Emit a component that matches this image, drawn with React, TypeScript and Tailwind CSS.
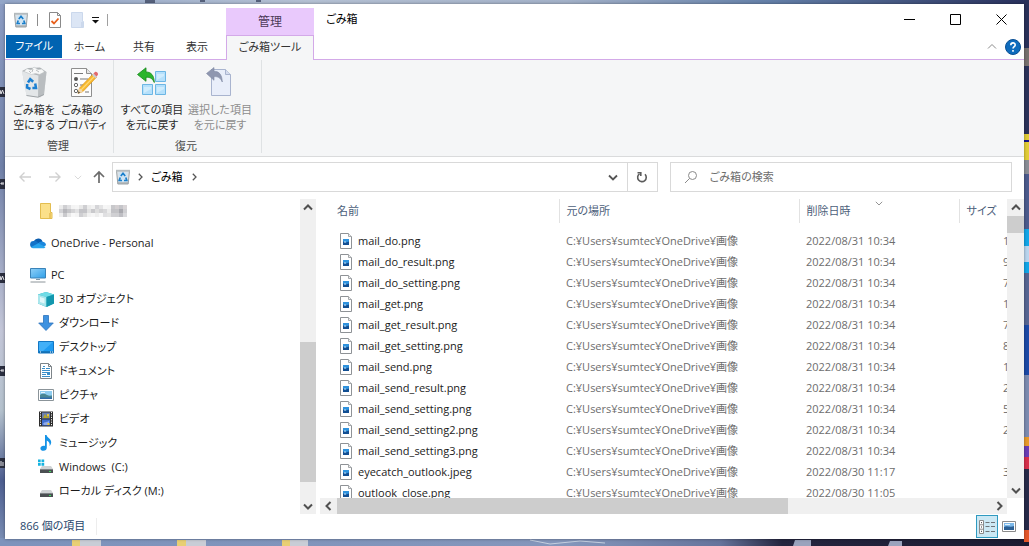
import { useState } from "react";
import type { ReactNode } from "react";

type FileRow = {
  name: string;
  date: string;
  size: string;
};

type TreeItem = {
  label: string;
  icon: ReactNode;
};

const LOCATION = "C:¥Users¥sumtec¥OneDrive¥画像";

const files: FileRow[] = [
  { name: "mail_do.png", date: "2022/08/31 10:34", size: "1" },
  { name: "mail_do_result.png", date: "2022/08/31 10:34", size: "9" },
  { name: "mail_do_setting.png", date: "2022/08/31 10:34", size: "7" },
  { name: "mail_get.png", date: "2022/08/31 10:34", size: "1" },
  { name: "mail_get_result.png", date: "2022/08/31 10:34", size: "7" },
  { name: "mail_get_setting.png", date: "2022/08/31 10:34", size: "8" },
  { name: "mail_send.png", date: "2022/08/31 10:34", size: "1" },
  { name: "mail_send_result.png", date: "2022/08/31 10:34", size: "2" },
  { name: "mail_send_setting.png", date: "2022/08/31 10:34", size: "5" },
  { name: "mail_send_setting2.png", date: "2022/08/31 10:34", size: "2" },
  { name: "mail_send_setting3.png", date: "2022/08/31 10:34", size: "" },
  { name: "eyecatch_outlook.jpeg", date: "2022/08/30 11:17", size: "3" },
  { name: "outlook_close.png", date: "2022/08/30 11:05", size: "" },
];

/* ---------- icons ---------- */

function Chevron({ dir, className }: { dir: "up" | "down" | "left" | "right"; className: string }) {
  const d = {
    up: "M1 6.5 5 2.5l4 4",
    down: "M1 3.5l4 4 4-4",
    left: "M6.5 1 2.5 5l4 4",
    right: "M3.5 1l4 4-4 4",
  }[dir];
  return (
    <svg viewBox="0 0 10 10" className={className} fill="none" stroke="currentColor" aria-hidden="true">
      <path d={d} />
    </svg>
  );
}

function SmallBinIcon() {
  return (
    <svg viewBox="0 0 16 16" className="size-4 shrink-0" aria-hidden="true">
      <path d="M1.500 1.500h13l-1.300 13.500H2.800z" fill="#dfe3e6" stroke="#9aa1a5" />
      <path d="M1 .8h14v1.900H1z" fill="#b4babe" />
      <path d="M3.500 3.500h9l-.8 9.500H4.300z" fill="#cfe4f3" />
      <path d="M5.800 7 8 4.300 10.200 7M10.800 8.500l1 3H9M7 11.500H4.200l1-3" fill="none" stroke="#1a7fcb" strokeWidth="1.700" />
      <path d="M3 14h10" stroke="#8f979c" />
    </svg>
  );
}

function LargeBinIcon() {
  return (
    <svg viewBox="0 0 32 32" className="size-8" aria-hidden="true">
      <path d="M4 5 8.500 29.500 22 31.500 26 28.500 28.500 6z" fill="#d4d7d9" />
      <path d="M4 5 8.500 29.500 20 31.200 20.500 9.500z" fill="#e3e6e8" />
      <path d="M20.500 9.500 20 31.200 26 28.500 28.500 6z" fill="#b9bdc0" />
      <path d="M4 5 10 2l12-.5L28.500 6l-8 3.500z" fill="#aeb2b5" />
      <path d="M6 5.500 9 2.500l4 1.500 3-3 4 2.500 4-.5 2.500 3-5 2.500-4-1-4 1z" fill="#f7f8f8" stroke="#c0c4c6" strokeWidth=".6" />
      <path d="m11 5 2 2M18 4l3 2M15 3l-1 3" stroke="#9da2a5" strokeWidth=".7" />
      <path d="M8.500 29.500 20 31.200 26 28.500" fill="none" stroke="#9ea3a6" />
      <g fill="none" stroke="#1c80d2" strokeWidth="2.500">
        <path d="m10 16.500 2.200-3.300 3 2.600" />
        <path d="M17.200 17.500 18 22h-3.600" />
        <path d="M12.500 23 9 21.500l.2-3.500" />
      </g>
    </svg>
  );
}

function PropertiesIcon() {
  return (
    <svg viewBox="0 0 32 32" className="size-8" aria-hidden="true">
      <path d="M5.500 2.500h15l5 5v23h-20z" fill="#fcfcfc" stroke="#8e8e8e" />
      <path d="M20.500 2.500v5h5" fill="#e6e6e6" stroke="#8e8e8e" />
      <circle cx="10" cy="13" r="2" fill="#555" />
      <circle cx="10" cy="19" r="1.700" fill="none" stroke="#666" />
      <circle cx="10" cy="25" r="1.700" fill="none" stroke="#666" />
      <path d="M8 7.500h9M14 13h8M14 19h5M19 26h4" stroke="#777" strokeWidth="1.200" />
      <path d="m12 27.500 1.500-5.500L27 8l3.500 3.200L17 25.500z" fill="#f7b92f" stroke="#d58c17" strokeWidth=".6" />
      <path d="M15 24 29 9.700" stroke="#ffd978" strokeWidth="1.200" />
      <path d="m12 27.500 1.500-5.500 3.500 3.500z" fill="#f2d8b0" />
      <path d="m12 27.500.6-2.200 1.400 1.400z" fill="#333" />
      <path d="m26 9 1.500-1.500 3.500 3.200-1.500 1.500z" fill="#c9cdd1" />
      <path d="M27.500 7.500 29 6c1.500-.8 3.600 1 2.800 3l-1.300 1.500z" fill="#e2696b" />
    </svg>
  );
}

function RestoreAllIcon() {
  return (
    <svg viewBox="0 0 32 32" className="size-8" aria-hidden="true">
      <g fill="#b5e0fb" stroke="#6cb6e4">
        <path d="M19.500 5.500h10v10h-10zM6.500 18.500h10v10h-10zM19.500 18.500h10v10h-10z" />
      </g>
      <path d="M21 21h7v2l-7 4zM8 21h7v2l-7 4zM21 8h7v2l-7 4z" fill="#cfecfd" />
      <path
        d="M1.500 8.500 10 1.800v4.200c5 0 8 3 8.300 10.500-2-4.500-4.500-5.300-8.300-5.200v4z"
        fill="#2bb52d"
        stroke="#14861b"
        strokeWidth=".8"
      />
    </svg>
  );
}

function RestoreSelectedIcon() {
  return (
    <svg viewBox="0 0 32 32" className="size-8" aria-hidden="true">
      <path d="M7.500 3.500h14l5 5v21h-19z" fill="#e9eefa" stroke="#a9b4cf" />
      <path d="M21.500 3.500v5h5" fill="#d5dcee" stroke="#a9b4cf" />
      <path
        d="M2.500 7.500 10 1.500v3.800c5 0 8 3 8.300 10.700-2-4.500-4.500-5.500-8.300-5.400v3.700z"
        fill="#8f97b0"
        stroke="#7d86a1"
        strokeWidth=".6"
      />
    </svg>
  );
}

function FolderIcon() {
  return (
    <svg viewBox="0 0 16 16" className="size-4 shrink-0" aria-hidden="true">
      <path d="M2 .5h11v9h1V15.500H2z" fill="#fbe08a" />
      <path d="M2.500.5h10v9h1.500v6H2.500z" fill="none" stroke="#e3bd50" />
      <path d="M12 10v5" stroke="#d9ab36" />
    </svg>
  );
}

function OneDriveIcon() {
  return (
    <svg viewBox="0 0 16 16" className="size-4 shrink-0" aria-hidden="true">
      <path d="M4 6A4.600 4.600 0 0 1 12.500 6.500l-3.500 4-5-1z" fill="#0b5cad" />
      <path d="M3.500 13A3.500 3.500 0 0 1 3.800 5.900c1.500-.2 2.500.4 3.500 1L12 12z" fill="#1272c8" />
      <path d="M7 9.500C9 6.500 11.500 5.900 12.800 6.800 15 7 16 8.600 16 10.200L13 12z" fill="#1b87dd" />
      <path d="M1.200 12 8.300 8.300 15.500 12c-.5.900-1.200 1.300-2.200 1.300H3.500c-1 0-1.800-.5-2.300-1.300z" fill="#28a3ec" />
    </svg>
  );
}

function PcIcon() {
  return (
    <svg viewBox="0 0 16 16" className="size-4 shrink-0" aria-hidden="true">
      <defs>
        <linearGradient id="pcScreen" x1="0" y1="0" x2="1" y2="1">
          <stop offset="0" stopColor="#8fd0f8" />
          <stop offset="1" stopColor="#2f9fe8" />
        </linearGradient>
      </defs>
      <path d="M.5 1.500h15v9.500H.5z" fill="url(#pcScreen)" stroke="#3a83b8" />
      <path d="M6 12.500h4" stroke="#7d98ab" />
      <path d="M.5 15h15" stroke="#8c9499" />
    </svg>
  );
}

function CubeIcon() {
  return (
    <svg viewBox="0 0 16 16" className="size-4 shrink-0" aria-hidden="true">
      <path d="M0 3.500 8 1l8 2.500v9L8.500 16 0 12.500z" fill="#20aebf" />
      <path d="M0 3.500 8 1l8 2.500L8.500 6z" fill="#6fdce6" />
      <path d="M0 3.500 8.500 6v10L0 12.500z" fill="#a9e6ec" />
      <path d="M2 6l4.500 1.500v5L2 11z" fill="#e1f8fa" />
      <path d="M8.500 6 16 3.500v9L8.500 16z" fill="#1397ae" />
    </svg>
  );
}

function DownloadIcon() {
  return (
    <svg viewBox="0 0 16 16" className="size-4 shrink-0" aria-hidden="true">
      <path d="M5.500.5h5V8h4.800L8 15.500.7 8h4.800z" fill="#3e92e0" stroke="#2b72bd" strokeWidth=".8" />
    </svg>
  );
}

function DesktopIcon() {
  return (
    <svg viewBox="0 0 16 16" className="size-4 shrink-0" aria-hidden="true">
      <path d="M.5 2.500h15v11.500H.5z" fill="#1e9bf2" stroke="#1377c4" />
      <path d="M1 3h14L5 12H1z" fill="#42b0f8" />
      <path d="M1 13h14" stroke="#0c568f" />
      <path d="M2 13h1M12 13h1M14 13h1" stroke="#fff" />
    </svg>
  );
}

function DocumentIcon() {
  return (
    <svg viewBox="0 0 16 16" className="size-4 shrink-0" aria-hidden="true">
      <path d="M2.500.5h8l3 3v12h-11z" fill="#fff" stroke="#7d8489" />
      <path d="M10.500.5v3h3" fill="none" stroke="#7d8489" />
      <path d="M5 3.500h2M4 5.500h3M8 5.500h4M4 7.500h8M4 9.500h8M4 11.500h4M4 13.500h8" stroke="#3a8fca" />
      <path d="M9 10h3v2H9z" fill="#3a8fca" />
    </svg>
  );
}

function PictureIcon() {
  return (
    <svg viewBox="0 0 16 16" className="size-4 shrink-0" aria-hidden="true">
      <path d="M.5 2.500h15v11H.5z" fill="#fff" stroke="#8b9499" />
      <path d="M2 4h12v8H2z" fill="#8fcdf0" />
      <path d="M2 8c3-2 5-1 7 0s4 .5 5 .5V12H2z" fill="#4a8794" />
      <path d="M2 10.500h12V12H2z" fill="#2f6aa8" />
      <path d="M3 5.500h4" stroke="#e5f5fd" />
    </svg>
  );
}

function VideoIcon() {
  return (
    <svg viewBox="0 0 16 16" className="size-4 shrink-0" aria-hidden="true">
      <path d="M1 .5h14v15H1z" fill="#2c2c2c" />
      <path d="M2.500 1v14M13.500 1v14" stroke="#f2f2f2" strokeDasharray="1.200 1.200" />
      <path d="M4 1.500h8v6H4z" fill="#6b7fb0" />
      <path d="M4 8.500h8v6H4z" fill="#3f6fd1" />
      <path d="m5 7 2-4 2 3 2-3v4z" fill="#b5a52a" />
      <path d="M5 13c2-3 3-1 6-3v4H6z" fill="#8fa9ea" />
      <path d="M9 3h2v2H9zM9.500 12h2v2h-2z" fill="#e6c53a" />
    </svg>
  );
}

function MusicIcon() {
  return (
    <svg viewBox="0 0 16 16" className="size-4 shrink-0" aria-hidden="true">
      <path
        d="M7 0h1.600c.2 2.600 4.600 3.600 4.600 7.200 0 1.500-.7 2.800-1.700 3.800.6-2.600-.4-4.600-2.700-5.600v7.400c0 1.800-1.400 3-3.300 3-1.700 0-3.100-.9-3.100-2.400 0-1.600 1.500-2.700 3.300-2.700.5 0 .9.100 1.300.2z"
        fill="#1593e6"
      />
    </svg>
  );
}

function DriveIcon({ system = false }: { system?: boolean }) {
  return (
    <svg viewBox="0 0 16 16" className="size-4 shrink-0" aria-hidden="true">
      <path d="M4 7h9l2 3H2z" fill="#cfd2d4" />
      <path d="M2 10h13v4H2z" fill="#4b4f52" />
      <path d="M2 10.500h13" stroke="#7e8386" />
      <path d="M11 12.500h2" stroke="#38e05a" />
      {system && (
        <>
          <path d="M0 0h7v7H0z" fill="#fff" />
          <path d="M0 .5h2.700v2.700H0zM3.500.5h2.700v2.700H3.500zM0 4h2.700v2.700H0zM3.500 4h2.700v2.700H3.500z" fill="#15b3e0" />
        </>
      )}
    </svg>
  );
}

function ImageFileIcon() {
  return (
    <svg viewBox="0 0 16 16" className="size-4 shrink-0" aria-hidden="true">
      <path d="M2.500.5h8l3 3v12h-11z" fill="#fff" stroke="#8e9296" />
      <path d="M10.500.5v3h3" fill="#eee" stroke="#a5a8ab" />
      <path d="M5 6h6v6H5z" fill="#124f93" />
      <path d="M5 6h6v2.500l-3 1-3-1z" fill="#2f92dd" />
      <path d="M6 8.500h2v1H6z" fill="#c7e6fa" />
    </svg>
  );
}

// pixelated folder name
function MosaicLabel() {
  const cells = [
    "#ececec", "#cfcfd2", "#e0e0e2", "#f4f4f4", "#f6f6f6", "#e8e8e8", "#cfcfd2", "#ececec", "#f2f2f2",
    "#d5d5d8", "#e4e4e5", "#f6f6f6", "#f4f4f4", "#c8c8cb", "#d3cfd1", "#c5c5c9", "#d9d5d7",
    "#d3d3d6", "#b7b7bb", "#c6c6c9", "#d4d4d6", "#e2e2e3", "#c4c4c8", "#c4c4c8", "#e2e2e2", "#c9c9cc",
    "#dedede", "#d1d1d3", "#d8d8da", "#ececec", "#c2c2c6", "#c3c3c6", "#a9a9af", "#cfcfd2",
    "#eeeeee", "#cacacd", "#e8e8e8", "#f8f8f8", "#f4f4f4", "#cfcfd2", "#dedede", "#f2f2f2", "#f6f6f6",
    "#eeeeee", "#f8f8f8", "#e0e0e2", "#e4e4e4", "#d0d0d3", "#cfcfd2", "#bebec3", "#dadadd",
  ];
  return (
    <svg viewBox="0 0 68 12" className="h-3 w-[68px]" role="img" aria-label="フォルダー">
      {cells.map((fill, i) => (
        <rect key={i} x={(i % 17) * 4} y={Math.floor(i / 17) * 4} width="4" height="4" fill={fill} />
      ))}
    </svg>
  );
}

// the bits of desktop that show around the window
function Wallpaper() {
  return (
    <svg
      viewBox="0 0 1029 546"
      preserveAspectRatio="none"
      className="absolute inset-0 size-full"
      aria-hidden="true"
    >
      <defs>
        <linearGradient id="top">
          <stop offset="0" stopColor="#93a6c8" />
          <stop offset=".3" stopColor="#b5c1d4" />
          <stop offset=".55" stopColor="#a4b2c9" />
          <stop offset=".75" stopColor="#6480a9" />
          <stop offset="1" stopColor="#28305c" />
        </linearGradient>
        <linearGradient id="left" x2="0" y2="1">
          <stop offset="0" stopColor="#8c9dc3" />
          <stop offset=".3" stopColor="#7080a8" />
          <stop offset=".6" stopColor="#c3c6d8" />
          <stop offset=".75" stopColor="#b4c1cd" />
          <stop offset=".88" stopColor="#4d5e90" />
          <stop offset="1" stopColor="#7f93b8" />
        </linearGradient>
        <linearGradient id="bottom">
          <stop offset="0" stopColor="#7d93bc" />
          <stop offset=".55" stopColor="#8496bb" />
          <stop offset=".7" stopColor="#66749c" />
          <stop offset=".76" stopColor="#24253f" />
          <stop offset="1" stopColor="#1b1b31" />
        </linearGradient>
      </defs>
      <rect width="1029" height="546" fill="url(#top)" />
      <rect y="4" width="6" height="542" fill="url(#left)" />
      <rect y="538" width="1029" height="8" fill="url(#bottom)" />
      <path d="M145 0h10v3h-10zM200 0h5v2h-5zM256 0h5v2h-5z" fill="#56617c" />
      <g fill="#2b2f40">
        <path d="M0 87h5v10H0zM0 179h5v10H0zM0 273h5v10H0zM0 366h5v10H0zM0 458h5v10H0z" />
      </g>
      <g stroke="#e8e8ec" fill="none">
        <path d="m0 90 1 4 1.500-4 1.500 4M4 184H1v-1h3M0 276l1 4 1.500-4 1.500 4M4 371H1v-1h3M1 461v5M3 462v4" />
      </g>
      <path d="M1024 0h5v134h-5z" fill="#2a3159" />
      <path d="M1024 48h5v18h-5z" fill="#77716f" />
      <path d="M1024 134h5v26h-5z" fill="#e2cd37" />
      <path d="M1024 140h5v2h-5z" fill="#14148c" />
      <path d="M1024 160h5v14h-5z" fill="#8a8d95" />
      <path d="M1024 174h5v55h-5z" fill="#4c5b8d" />
      <path d="M1024 229h5v44h-5z" fill="#12a6e8" />
      <path d="M1024 246h5v16h-5z" fill="#b9d5ee" />
      <path d="M1024 273h5v52h-5z" fill="#566592" />
      <path d="M1024 325h5v50h-5z" fill="#1c49a6" />
      <path d="M1024 375h5v62h-5z" fill="#7c8bb0" />
      <path d="M1024 437h5v9h-5z" fill="#e79a2b" />
      <path d="M1024 446h5v11h-5z" fill="#6a3cb4" />
      <path d="M1024 457h5v12h-5z" fill="#d62f4b" />
      <path d="M1024 469h5v61h-5z" fill="#272a49" />
      <path d="M1024 530h5v12h-5z" fill="#e4572b" />
      <path d="M72 540h8v6h-8zM177 540h9v6h-9zM282 540h8v6h-8z" fill="#e8cf74" />
      <path d="M80 540h21v6H80zM186 540h20v6h-20zM290 540h18v6h-18z" fill="#c9cdd6" />
      <path d="M530 540l20 4 30-3 25 2" fill="none" stroke="#c4cfdf" />
      <path d="M795 540h16v6h-18zM890 541h12v5h-14z" fill="#9aa3bd" />
    </svg>
  );
}

/* ---------- ribbon ---------- */

function RibbonButton({
  icon,
  lines,
  disabled,
  className,
}: {
  icon: ReactNode;
  lines: [string, string];
  disabled?: boolean;
  className: string;
}) {
  return (
    <button
      type="button"
      disabled={disabled}
      className={`flex flex-col items-center gap-1 whitespace-nowrap text-[11px] leading-[15px] text-[#2a2a2a] disabled:text-[#8d8d8d] ${className}`}
    >
      {icon}
      <span>
        {lines[0]}
        <br />
        {lines[1]}
      </span>
    </button>
  );
}

function RibbonGroup({ title, children }: { title: string; children: ReactNode }) {
  return (
    <div className="flex flex-col border-r border-[#dfe2e4] pl-1 pr-[7px] pt-[6px]">
      <div className="flex">{children}</div>
      <div className="mt-[6px] text-center text-[11px] leading-4 text-[#4a4a4a]">{title}</div>
    </div>
  );
}

function TitleBar() {
  return (
    <div className="flex h-[31px]">
      <div className="flex w-[221px] items-center pl-2">
        <button type="button" aria-label="ごみ箱">
          <SmallBinIcon />
        </button>
        <span className="ml-2 h-3 w-px bg-[#8c8c8c]" />
        <button type="button" aria-label="プロパティ" className="ml-[9px]">
          <svg viewBox="0 0 16 16" className="size-4" aria-hidden="true">
            <path d="M2.500.5h8l3 3v12h-11z" fill="#fff" stroke="#8a8a8a" />
            <path d="M10.500.5v3h3" fill="none" stroke="#8a8a8a" />
            <path d="m4.500 9 2.500 2.500 4.500-5" fill="none" stroke="#e8601c" strokeWidth="1.800" />
          </svg>
        </button>
        <button type="button" aria-label="新しいフォルダー" disabled className="ml-[7px]">
          <svg viewBox="0 0 16 16" className="size-4" aria-hidden="true">
            <path d="M1.500.5h11v9h1v6h-12z" fill="#dce6f5" stroke="#cbd8ec" />
            <path d="M12 10v5" stroke="#bccbe3" />
          </svg>
        </button>
        <button type="button" aria-label="クイック アクセス ツール バーのカスタマイズ" className="ml-[5px]">
          <svg viewBox="0 0 9 9" className="size-[9px]" aria-hidden="true">
            <path d="M1 2.500h7" stroke="#111" />
            <path d="M1 5h7L4.500 8.500z" fill="#111" />
          </svg>
        </button>
        <span className="ml-[7px] h-3 w-px bg-[#a0a0a0]" />
      </div>
      <div className="mt-1 flex w-[88px] items-center justify-center bg-[#e9c9fc] text-xs text-[#4c3a58]">管理</div>
      <h1 className="ml-3 self-center text-[11px] text-black">ごみ箱</h1>
      <div className="ml-auto flex text-black">
        <button type="button" aria-label="最小化" className="flex w-[46px] items-center justify-center">
          <svg viewBox="0 0 11 11" className="size-[11px]" stroke="currentColor" aria-hidden="true">
            <path d="M0 5.500h11" />
          </svg>
        </button>
        <button type="button" aria-label="最大化" className="flex w-[46px] items-center justify-center">
          <svg viewBox="0 0 11 11" className="size-[11px]" fill="none" stroke="currentColor" aria-hidden="true">
            <path d="M.5.5h10v10H.5z" />
          </svg>
        </button>
        <button type="button" aria-label="閉じる" className="flex w-[46px] items-center justify-center">
          <svg viewBox="0 0 11 11" className="size-[11px]" stroke="currentColor" aria-hidden="true">
            <path d="m.5.5 10 10M10.500.5l-10 10" />
          </svg>
        </button>
      </div>
    </div>
  );
}

function TabRow() {
  return (
    <div className="flex h-[25px] border-b border-[#d3a9e8] text-[11px] text-[#333]">
      <button type="button" className="ml-px mb-px w-14 bg-[#0063b1] text-white">
        ファイル
      </button>
      <button type="button" className="w-[55px]">
        ホーム
      </button>
      <button type="button" className="w-[54px]">
        共有
      </button>
      <button type="button" className="w-[52px]">
        表示
      </button>
      <button
        type="button"
        className="-mb-px ml-[3px] w-[88px] border border-b-0 border-[#d3a9e8] bg-[#f5f6f7] pb-px"
      >
        ごみ箱ツール
      </button>
      <div className="ml-auto flex items-center gap-2 pr-[3px]">
        <button type="button" aria-label="リボンの最小化" className="text-[#8b8b8b]">
          <Chevron dir="up" className="size-[10px]" />
        </button>
        <button type="button" aria-label="ヘルプ">
          <svg viewBox="0 0 16 16" className="size-4" aria-hidden="true">
            <circle cx="8" cy="8" r="7.500" fill="#0f6cbd" stroke="#0a4f93" />
            <path
              d="M5.800 6.200c0-3 4.400-3 4.400-.3C10.200 7.500 8 7.700 8 9.500M8 11v1.700"
              fill="none"
              stroke="#fff"
              strokeWidth="1.600"
            />
          </svg>
        </button>
      </div>
    </div>
  );
}

function Ribbon() {
  return (
    <div className="flex h-[97px] border-b border-[#dadbdc] bg-[#f5f6f7] pb-[3px] pl-px">
      <RibbonGroup title="管理">
        <RibbonButton className="w-12" icon={<LargeBinIcon />} lines={["ごみ箱を", "空にする"]} />
        <RibbonButton className="w-12" icon={<PropertiesIcon />} lines={["ごみ箱の", "プロパティ"]} />
      </RibbonGroup>
      <RibbonGroup title="復元">
        <RibbonButton className="w-[68px]" icon={<RestoreAllIcon />} lines={["すべての項目", "を元に戻す"]} />
        <RibbonButton
          className="w-[68px]"
          icon={<RestoreSelectedIcon />}
          lines={["選択した項目", "を元に戻す"]}
          disabled
        />
      </RibbonGroup>
    </div>
  );
}

function AddressRow() {
  const [query, setQuery] = useState("");

  return (
    <div className="flex items-center py-[5px] pl-[13px] pr-3">
      <div className="flex w-[94px] shrink-0 items-center text-[#d0d0d0]">
        <button type="button" aria-label="戻る" disabled>
          <svg viewBox="0 0 14 12" className="h-3 w-[14px]" fill="none" stroke="currentColor" strokeWidth="1.400">
            <path d="M13 6H2M6.500 1.500 2 6l4.500 4.500" />
          </svg>
        </button>
        <button type="button" aria-label="進む" disabled className="ml-4">
          <svg viewBox="0 0 14 12" className="h-3 w-[14px]" fill="none" stroke="currentColor" strokeWidth="1.400">
            <path d="M1 6h11M7.500 1.500 12 6l-4.500 4.500" />
          </svg>
        </button>
        <button type="button" aria-label="最近表示した場所" disabled className="ml-3">
          <Chevron dir="down" className="size-2" />
        </button>
        <button type="button" aria-label="上へ" className="ml-[11px] text-[#6b6b6b]">
          <svg viewBox="0 0 12 14" className="h-[14px] w-3" fill="none" stroke="currentColor" strokeWidth="1.700">
            <path d="M6 13V2M1 7l5-5 5 5" />
          </svg>
        </button>
      </div>
      <div className="flex h-[30px] min-w-0 flex-[541] items-center border border-[#d9d9d9] pl-[2px] text-[11px] text-black">
        <SmallBinIcon />
        <Chevron dir="right" className="ml-[5px] size-2 stroke-[1.6] text-[#555]" />
        <button type="button" className="ml-[7px]">
          ごみ箱
        </button>
        <Chevron dir="right" className="ml-2 size-2 stroke-[1.6] text-[#555]" />
        <button type="button" aria-label="以前の場所" className="ml-auto mr-[9px] text-[#555]">
          <Chevron dir="down" className="size-[10px] stroke-[1.8]" />
        </button>
        <button
          type="button"
          aria-label="最新の情報に更新"
          className="flex h-full w-[30px] items-center justify-center border-l border-[#d9d9d9] text-[#5c5c5c]"
        >
          <svg viewBox="0 0 12 12" className="size-3" fill="none" stroke="currentColor" strokeWidth="1.600">
            <path d="M3.500 2.800A4.300 4.300 0 1 0 9 3.300" />
            <path d="M1.500 1.700h3.300V5" />
          </svg>
        </button>
      </div>
      <label className="ml-3 flex h-[30px] min-w-0 flex-[327] items-center border border-[#d9d9d9] pl-[13px]">
        <svg viewBox="0 0 14 14" className="size-[14px] shrink-0" fill="none" stroke="#8a8a8a" aria-hidden="true">
          <circle cx="8.500" cy="5.500" r="4" />
          <path d="M5.500 8.500 1 13" />
        </svg>
        <input
          type="text"
          aria-label="ごみ箱の検索"
          placeholder="ごみ箱の検索"
          value={query}
          onChange={(e) => setQuery(e.target.value)}
          className="ml-3 min-w-0 flex-1 text-[11px] text-[#333] outline-none placeholder:text-[#6d6d6d]"
        />
      </label>
    </div>
  );
}

/* ---------- navigation pane ---------- */

const pcChildren: TreeItem[] = [
  { label: "3D オブジェクト", icon: <CubeIcon /> },
  { label: "ダウンロード", icon: <DownloadIcon /> },
  { label: "デスクトップ", icon: <DesktopIcon /> },
  { label: "ドキュメント", icon: <DocumentIcon /> },
  { label: "ピクチャ", icon: <PictureIcon /> },
  { label: "ビデオ", icon: <VideoIcon /> },
  { label: "ミュージック", icon: <MusicIcon /> },
  { label: "Windows  (C:)", icon: <DriveIcon system /> },
  { label: "ローカル ディスク (M:)", icon: <DriveIcon /> },
];

function NavPane() {
  return (
    <div className="flex w-[311px] shrink-0">
      <nav className="min-w-0 flex-1 overflow-hidden text-[11px] text-[#1b1b1b]">
        <a href="#folder" className="flex h-6 items-center gap-[5px] pl-[33px]">
          <FolderIcon />
          <MosaicLabel />
        </a>
        <a href="#onedrive" className="mt-2 flex h-6 items-center gap-[5px] pl-[25px]">
          <OneDriveIcon />
          OneDrive - Personal
        </a>
        <a href="#pc" className="mt-2 flex h-6 items-center gap-[5px] pl-[25px]">
          <PcIcon />
          PC
        </a>
        <ul>
          {pcChildren.map((item) => (
            <li key={item.label}>
              <a href="#pc" className="flex h-6 items-center gap-[5px] whitespace-pre pl-[33px]">
                {item.icon}
                {item.label}
              </a>
            </li>
          ))}
        </ul>
      </nav>
      <div className="flex w-4 flex-col bg-[#f0f0f0] text-[#505050]">
        <div className="flex h-[17px] items-center justify-center">
          <Chevron dir="up" className="size-[10px] stroke-2" />
        </div>
        <div className="flex-[126]" />
        <div className="flex-[141] bg-[#cdcdcd]" />
        <div className="flex-[15]" />
        <div className="flex h-[17px] items-center justify-center">
          <Chevron dir="down" className="size-[10px] stroke-2" />
        </div>
      </div>
    </div>
  );
}

/* ---------- file list ---------- */

function FileList() {
  return (
    <div className="ml-1 flex min-w-0 flex-1 flex-col">
      <div className="flex min-h-0 flex-1">
        <div className="min-w-0 flex-1 overflow-hidden">
          <table className="w-[760px] table-fixed text-[11px]">
            <colgroup>
              <col className="w-[239px]" />
              <col className="w-[240px]" />
              <col className="w-[160px]" />
              <col className="w-[121px]" />
            </colgroup>
            <thead>
              <tr className="h-6 text-left text-[#4c607a]">
                <th className="border-r border-[#e2e2e2] pl-[17px] font-normal">名前</th>
                <th className="border-r border-[#e2e2e2] pl-[7px] font-normal">元の場所</th>
                <th className="relative border-r border-[#e2e2e2] pl-[7px] font-normal">
                  削除日時
                  <Chevron dir="down" className="absolute left-1/2 top-0 size-2 -translate-x-1/2 text-[#777]" />
                </th>
                <th className="pl-[7px] font-normal">サイズ</th>
              </tr>
              <tr className="h-[7px]">
                <td colSpan={4} className="p-0" />
              </tr>
            </thead>
            <tbody className="text-[#6d6d6d]">
              {files.map((file) => (
                <tr key={file.name} className="h-[21px] leading-[21px]">
                  <td className="p-0 pl-[18px] text-[#1b1b1b]">
                    <div className="flex items-center gap-1">
                      <ImageFileIcon />
                      {file.name}
                    </div>
                  </td>
                  <td className="p-0 pl-[7px]">{LOCATION}</td>
                  <td className="p-0 pl-[7px]">{file.date}</td>
                  <td className="p-0 pl-11">{file.size}</td>
                </tr>
              ))}
            </tbody>
          </table>
        </div>
        <div className="flex w-[17px] flex-col bg-[#f0f0f0] text-[#505050]">
          <div className="flex h-[17px] items-center justify-center">
            <Chevron dir="up" className="size-[10px] stroke-2" />
          </div>
          <div className="h-[17px] bg-[#cdcdcd]" />
          <div className="flex-1" />
          <div className="flex h-[17px] items-center justify-center">
            <Chevron dir="down" className="size-[10px] stroke-2" />
          </div>
        </div>
      </div>
      <div className="mr-[17px] flex h-4 bg-[#f0f0f0] text-[#505050]">
        <div className="flex w-[17px] items-center justify-center">
          <Chevron dir="left" className="size-[10px] stroke-2" />
        </div>
        <div className="flex-[451] bg-[#cdcdcd]" />
        <div className="flex-[202]" />
        <div className="flex w-[17px] items-center justify-center">
          <Chevron dir="right" className="size-[10px] stroke-2" />
        </div>
      </div>
    </div>
  );
}

function StatusBar() {
  return (
    <div className="flex h-[25px] items-center pl-[15px] pr-[7px] text-[11px] text-[#27466b]">
      <span className="border-r border-[#ededed] pr-[11px]">866 個の項目</span>
      <button
        type="button"
        aria-label="詳細"
        className="ml-auto flex h-[23px] w-[22px] items-center justify-center border border-[#2f9ac0] bg-[#cbe8f4]"
      >
        <svg viewBox="0 0 18 14" className="h-[14px] w-[18px]" aria-hidden="true">
          <path d="M1.500.5h4v13h-4zM1.500 4.800h4M1.500 9.200h4" fill="#fff" stroke="#8b8b8b" />
          <path d="M3 2.700h1M3 7h1M3 11.300h1" stroke="#333" />
          <path d="M7.500 2.500h4M13 2.500h4M7.500 6.500h4M13 6.500h4M7.500 11.500h4M13 11.500h4" stroke="#6f7478" />
        </svg>
      </button>
      <button type="button" aria-label="大アイコン" className="ml-1 flex w-[15px] items-center">
        <svg viewBox="0 0 14 11" className="h-[11px] w-[14px]" aria-hidden="true">
          <path d="M.5.5h13v10H.5z" fill="#fff" stroke="#8b8b8b" />
          <path d="M2 2h10v7H2z" fill="#7db9ea" />
          <path d="M2 6c3-2 6 1 10-1v4H2z" fill="#2b5f94" />
          <path d="M3 3.500h5" stroke="#e3f2fc" />
        </svg>
      </button>
    </div>
  );
}

export default function App() {
  return (
    <div className="relative h-screen overflow-hidden pb-[7px] pl-[5px] pr-[5px] pt-1 font-['Open_Sans','Noto_Sans_CJK_JP',sans-serif] [font-feature-settings:'palt']">
      <Wallpaper />
      <main className="relative flex h-full flex-col bg-white shadow-[0_0_3px_rgba(0,0,0,0.4)]">
        <TitleBar />
        <TabRow />
        <Ribbon />
        <AddressRow />
        <div className="mt-[2px] flex min-h-0 flex-1">
          <NavPane />
          <FileList />
        </div>
        <StatusBar />
      </main>
    </div>
  );
}
